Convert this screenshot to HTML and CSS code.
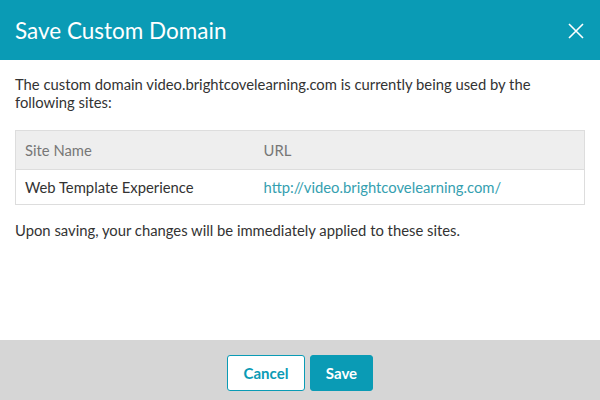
FILE: index.html
```html
<!DOCTYPE html>
<html lang="en">
<head>
    <meta charset="UTF-8">
    <title>Save Custom Domain</title>
    <link rel="stylesheet" href="styles.css">
</head>
<body>
    <div class="modal">
        <header class="modal-header">
            <h2 class="modal-title">Save Custom Domain</h2>
            <button class="modal-close" aria-label="Close">
                <svg width="16" height="16" viewBox="0 0 16 16">
                    <path d="M1 1 L15 15 M15 1 L1 15" stroke="#fff" stroke-width="1.6" fill="none"/>
                </svg>
            </button>
        </header>

        <main class="modal-body">
            <p>The custom domain video.brightcovelearning.com is currently being used by the following sites:</p>

            <table class="sites-table">
                <thead>
                    <tr>
                        <th class="col-name">Site Name</th>
                        <th>URL</th>
                    </tr>
                </thead>
                <tbody>
                    <tr>
                        <td class="col-name">Web Template Experience</td>
                        <td><a href="#">http://video.brightcovelearning.com/</a></td>
                    </tr>
                </tbody>
            </table>

            <p>Upon saving, your changes will be immediately applied to these sites.</p>
        </main>

        <footer class="modal-footer">
            <button class="btn btn-secondary">Cancel</button>
            <button class="btn btn-primary">Save</button>
        </footer>
    </div>
</body>
</html>
```

FILE: styles.css
```css
:root {
    --brand: #0a9bb5;
    --link: #35a0b0;
    --text: #333333;
    --muted: #777777;
    --border: #dddddd;
    --footer-bg: #d6d6d6;
}

* {
    margin: 0;
    padding: 0;
    box-sizing: border-box;
}

body {
    font-family: Lato, "Open Sans", sans-serif;
    color: var(--text);
    background: #fff;
    width: 600px;
    height: 400px;
    overflow: hidden;
}

.modal {
    display: flex;
    flex-direction: column;
    height: 400px;
}

.modal-header {
    background: var(--brand);
    height: 60px;
    display: flex;
    align-items: center;
    justify-content: space-between;
    padding: 0 16px 0 15px;
}

.modal-title {
    color: #fff;
    font-size: 22.5px;
    font-weight: 400;
    margin-top: 1px;
}

.modal-close {
    background: none;
    border: none;
    display: flex;
    padding: 0;
    margin-top: 2px;
}

.modal-body {
    flex: 1;
    padding: 15px 15px 0;
    font-size: 14.8px;
    line-height: 18px;
}

.sites-table {
    width: 100%;
    border-collapse: collapse;
    margin: 19px 0 16px;
    border: 1px solid var(--border);
}

.sites-table th,
.sites-table td {
    text-align: left;
    padding: 0 9px;
    font-weight: 400;
}

.sites-table th {
    background: #eeeeee;
    color: var(--muted);
    height: 39px;
    border-bottom: 1px solid var(--border);
}

.sites-table td {
    height: 35px;
}

.sites-table .col-name {
    width: 239px;
}

.sites-table a {
    color: var(--link);
    text-decoration: none;
}

.modal-footer {
    background: var(--footer-bg);
    height: 60px;
    display: flex;
    justify-content: center;
    align-items: center;
    gap: 5px;
    padding-top: 6px;
}

.btn {
    font-family: inherit;
    font-size: 15px;
    font-weight: 700;
    height: 36px;
    border-radius: 3px;
    border: 1px solid var(--brand);
}

.btn-secondary {
    width: 78px;
    background: #fff;
    color: var(--brand);
}

.btn-primary {
    width: 63px;
    background: var(--brand);
    color: #fff;
}
```
